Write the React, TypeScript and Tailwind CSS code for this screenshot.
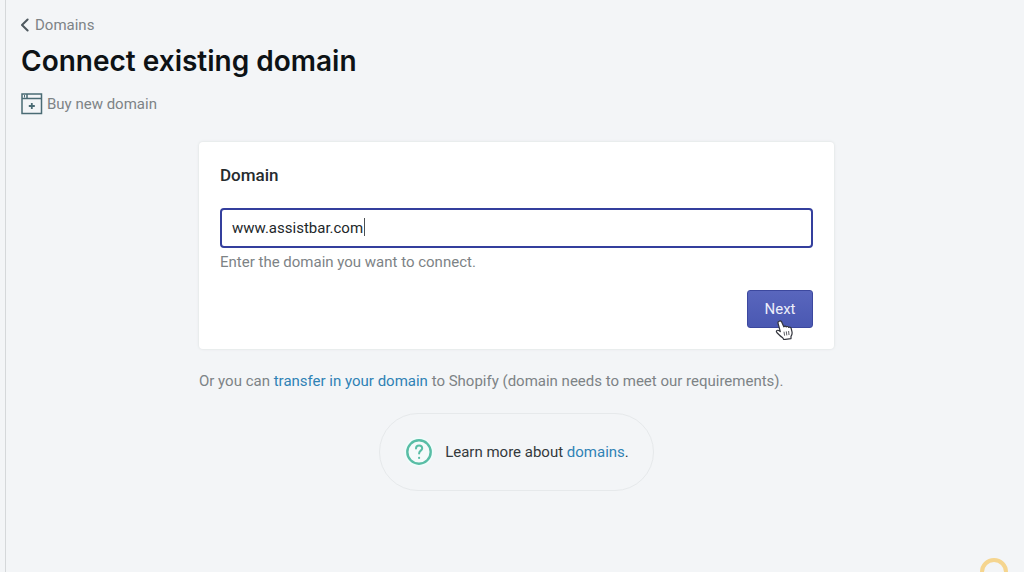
import { useState } from "react";

function BackIcon() {
  return (
    <svg viewBox="0 0 10 14" className="h-[14px] w-[10px]" fill="none" stroke="#4f595f" strokeWidth="2">
      <path d="M6.6 1.5 1 7l5.6 5.5" strokeLinecap="round" strokeLinejoin="round" />
    </svg>
  );
}

function WindowPlusIcon() {
  return (
    <svg viewBox="0 0 22 22" className="h-[22px] w-[22px]" fill="none" stroke="#4a6b74" strokeWidth="1.5">
      <rect x="1" y="1" width="19.5" height="19.5" />
      <path d="M1 5.5h19.5M6 1v4.5" />
      <path d="M10.8 10v6M7.8 13h6" strokeWidth="1.8" />
      <path d="M3.5 2v2.5" strokeWidth="1" />
    </svg>
  );
}

function HelpIcon() {
  return (
    <svg viewBox="0 0 30 30" className="h-[30px] w-[30px]" fill="none">
      <circle cx="15" cy="15" r="14.5" fill="#effdfb" />
      <circle cx="15" cy="15" r="11.7" fill="#f5fafa" stroke="#58bda5" strokeWidth="2.4" />
      <path
        d="M12 11.6c0-2 1.3-3.2 3.1-3.2s3.1 1.1 3.1 2.8c0 2.5-3.1 2.4-3.1 5.2"
        stroke="#58bda5"
        strokeWidth="2"
        strokeLinecap="round"
      />
      <circle cx="15.1" cy="20.9" r="1.1" fill="#58bda5" />
    </svg>
  );
}

function HandCursor() {
  return (
    <svg viewBox="0 0 18 20" className="pointer-events-none absolute top-[29px] left-[27px] h-5 w-[18px]">
      <path
        d="M4.2 1.2c1.2-.6 2.2 0 2.7 1.2l1.9 4.4c.7-.8 1.9-.8 2.5.1.8-.7 1.9-.5 2.4.5 1-.6 2.1 0 2.5 1.1l.8 3.3c.3 1.6-.1 3.3-1 4.6v2.2l-7.2 1-1.1-1.8c-2-1.2-3.8-3.1-5.7-5.1-1.4-1.5.2-3.1 1.8-2.1l1.5 1L3.1 3.5c-.4-1 .1-1.9 1.1-2.3Z"
        fill="#fff"
        stroke="#33353d"
        strokeWidth="1.2"
        strokeLinejoin="round"
      />
      <path d="m9 11.7.6 4M11.3 11.4l.5 4M13.6 11l.4 4" stroke="#33353d" strokeWidth=".8" />
    </svg>
  );
}

export default function App() {
  const [domain, setDomain] = useState("www.assistbar.com");

  return (
    <div className="min-h-screen bg-[#f3f5f7] pl-[5px] font-[Roboto,sans-serif] text-[15px] leading-5 text-[#7d8386]">
      <main className="relative min-h-screen overflow-hidden border-l border-[#d5d8da] pt-[15px] pr-3 pl-[15px]">
        <header>
          <a href="#domains" className="inline-flex items-center gap-1">
            <BackIcon />
            Domains
          </a>
          <h1 className="mt-1.5 font-[Inter,sans-serif] text-[28px] leading-9 font-semibold text-[#0d1215]">
            Connect existing domain
          </h1>
          <button type="button" className="mt-3.5 flex items-center gap-1">
            <WindowPlusIcon />
            Buy new domain
          </button>
        </header>

        <div className="mx-auto mt-[27px] max-w-[635px]">
          <form
            className="rounded-[4px] bg-white px-[21px] pt-[21px] pb-[21px] shadow-[0_0_2px_1px_#e6e9ea]"
            onSubmit={(e) => e.preventDefault()}
          >
            <label htmlFor="domain" className="block text-[17px] leading-6 font-medium text-[#262b2e]">
              Domain
            </label>
            <div className="relative mt-[21px]">
              <input
                id="domain"
                type="text"
                value={domain}
                onChange={(e) => setDomain(e.target.value)}
                className="block h-10 w-full rounded-[4px] border-2 border-[#343f9d] px-[10px] text-[#22272a] caret-transparent outline-none"
              />
              <span className="absolute top-[10px] left-36 h-[18px] w-px bg-[#4a4f52]" />
            </div>
            <p className="mt-1">Enter the domain you want to connect.</p>
            <div className="mt-[18px] flex justify-end">
              <button
                type="submit"
                className="relative h-[38px] w-[66px] rounded-[3px] border border-[#3c489f] bg-linear-to-b from-[#5966bd] to-[#4a58b2] text-[#eceefa]"
              >
                Next
                <HandCursor />
              </button>
            </div>
          </form>

          <p className="mt-[22px]">
            Or you can{" "}
            <a href="#transfer" className="text-[#2f82b5]">
              transfer in your domain
            </a>{" "}
            to Shopify (domain needs to meet our requirements).
          </p>

          <div className="mt-[22px] flex justify-center">
            <div className="flex h-[78px] items-center gap-[11px] rounded-full border border-[#e6e9eb] px-6 text-[#33393c]">
              <HelpIcon />
              <p>
                Learn more about{" "}
                <a href="#help" className="text-[#2f82b5]">
                  domains
                </a>
                .
              </p>
            </div>
          </div>
        </div>

        <span className="absolute right-4 -bottom-[14px] h-7 w-7 rounded-full border-4 border-[#f5d58f]" />
      </main>
    </div>
  );
}
